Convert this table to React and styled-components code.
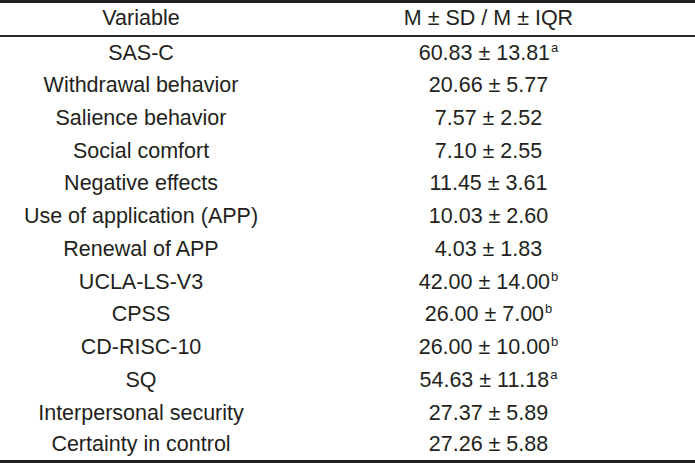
import React from "react";
import styled, { createGlobalStyle } from "styled-components";

const Global = createGlobalStyle`
  html, body { margin: 0; padding: 0; background: #fff; }
  body { font-family: "Liberation Sans", Arial, sans-serif; }
`;

const Table = styled.table`
  width: 695px;
  border-collapse: collapse;
  border-top: 3px solid #231f20;
  border-bottom: 4px solid #231f20;
  color: #231f20;
  font-family: "Liberation Sans", Arial, sans-serif;
  font-size: 21.5px;
`;

const HeadCell = styled.th`
  font-weight: normal;
  height: 32px;
  padding: 0;
  text-align: center;
  vertical-align: middle;
  border-bottom: 2px solid #2a2627;
  line-height: 1;
  width: ${(p) => p.$w || "auto"};
`;

const Row = styled.tr`
  height: 32.75px;
`;

const Cell = styled.td`
  padding: 0;
  text-align: center;
  vertical-align: middle;
  line-height: 24px;
`;

const Sup = styled.sup`
  font-size: 13px;
  line-height: 0;
  vertical-align: 0;
  position: relative;
  top: -8px;
  margin-left: 1px;
`;

const rows = [
  ["SAS-C", "60.83 ± 13.81", "a"],
  ["Withdrawal behavior", "20.66 ± 5.77"],
  ["Salience behavior", "7.57 ± 2.52"],
  ["Social comfort", "7.10 ± 2.55"],
  ["Negative effects", "11.45 ± 3.61"],
  ["Use of application (APP)", "10.03 ± 2.60"],
  ["Renewal of APP", "4.03 ± 1.83"],
  ["UCLA-LS-V3", "42.00 ± 14.00", "b"],
  ["CPSS", "26.00 ± 7.00", "b"],
  ["CD-RISC-10", "26.00 ± 10.00", "b"],
  ["SQ", "54.63 ± 11.18", "a"],
  ["Interpersonal security", "27.37 ± 5.89"],
  ["Certainty in control", "27.26 ± 5.88"],
];

export default function App() {
  return (
    <>
      <Global />
      <Table>
        <thead>
          <tr>
            <HeadCell $w="282px">Variable</HeadCell>
            <HeadCell>M ± SD / M ± IQR</HeadCell>
          </tr>
        </thead>
        <tbody>
          {rows.map(([name, val, sup]) => (
            <Row key={name}>
              <Cell>{name}</Cell>
              <Cell>
                {val}
                {sup && <Sup>{sup}</Sup>}
              </Cell>
            </Row>
          ))}
        </tbody>
      </Table>
    </>
  );
}
